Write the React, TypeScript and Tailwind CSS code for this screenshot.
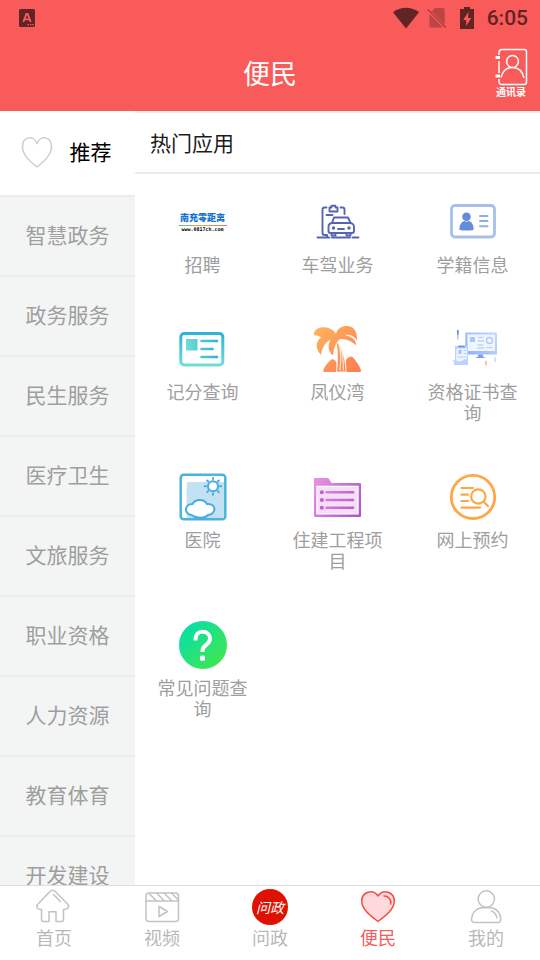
import { useState, type ReactNode } from "react";

const categories = [
  "智慧政务",
  "政务服务",
  "民生服务",
  "医疗卫生",
  "文旅服务",
  "职业资格",
  "人力资源",
  "教育体育",
  "开发建设",
];

function StatusBar() {
  return (
    <div className="flex h-9 items-center pr-3 pl-[19px] text-[#602424]">
      <svg width="16" height="18" viewBox="0 0 16 18" aria-hidden="true">
        <rect width="16" height="18" rx="1.5" fill="currentColor" />
        <path d="M4.3 13 7.4 5h1.2l3.1 8M5.6 10.4h4.8" fill="none" stroke="#f85b5a" strokeWidth="1.9" />
        <path d="M8.5 15.8h1.3M11 15.8h1.3M13.4 15.8h1.3" stroke="#f85b5a" strokeWidth="1.4" />
      </svg>
      <div className="ml-auto flex items-center">
        <svg width="26" height="22" viewBox="0 0 26 22" aria-hidden="true">
          <path d="M0 5.2C7.6-.9 18.4-.9 26 5.2L13 21.5Z" fill="currentColor" />
        </svg>
        <svg className="ml-2" width="20" height="22" viewBox="0 0 20 22" aria-hidden="true">
          <path d="M8 1h8a1.7 1.7 0 0 1 1.700 1.700V17.500L4.800 4.300ZM2.500 7 16 20.500H4A1.500 1.500 0 0 1 2.500 19Z" fill="currentColor" opacity=".4" />
          <path d="m.8 2.500 18 18" stroke="currentColor" strokeWidth="1.600" opacity=".5" />
        </svg>
        <svg className="ml-3" width="16" height="22" viewBox="0 0 16 22" aria-hidden="true">
          <path d="M5 0h6v2h4v20H1V2h4Z" fill="currentColor" />
          <path d="m9.500 5-5.300 8h3v6l5-8H9Z" fill="#f85b5a" />
        </svg>
        <span className="ml-3 font-[Roboto,sans-serif] text-[21px] leading-6 font-medium">6:05</span>
      </div>
    </div>
  );
}

function ContactsButton() {
  return (
    <button type="button" className="absolute top-3 right-3 flex flex-col items-center text-white">
      <svg width="34" height="38" viewBox="1 0 34 38" fill="none" stroke="currentColor" strokeWidth="1.500" aria-hidden="true">
        <path d="M5 7V4.500a3 3 0 0 1 3-3h22.500a2 2 0 0 1 2 2v30.500a2.500 2.500 0 0 1-2.500 2.500H7a3 3 0 0 1-2-2.500v-3M5 13v12" transform="translate(1 0)" />
        <path d="M2.500 9.500H7M2.500 28H7" strokeWidth="3" />
        <circle cx="19.500" cy="13.500" r="5.900" />
        <path d="M8 29.500C9.500 23 13.500 19.500 19.500 19.500s10 4 11.500 10.500" />
      </svg>
      <span className="text-[10px] leading-[11px] font-bold">通讯录</span>
    </button>
  );
}

function RecruitLogo() {
  return (
    <span className="flex h-12 flex-col items-center justify-center whitespace-nowrap">
      <span className="text-[9px] leading-[14px] font-black text-[#1672d2]">南充零距离</span>
      <span className="h-px w-12 bg-linear-to-r from-[#58b98a] via-[#d9a35a] to-[#e8705c]" />
      <span className="font-['DejaVu_Sans_Mono',monospace] text-[5px] leading-[7px] font-bold text-black">www.0817ch.com</span>
    </span>
  );
}

function Icon({ children }: { children: ReactNode }) {
  return (
    <svg width="48" height="48" viewBox="0 0 48 48" fill="none" strokeLinecap="round" strokeLinejoin="round" aria-hidden="true">
      {children}
    </svg>
  );
}

const apps: { name: string; icon: ReactNode }[] = [
  { name: "招聘", icon: <RecruitLogo /> },
  {
    name: "车驾业务",
    icon: (
      <Icon>
        <g stroke="#5665b3" strokeWidth="1.900">
          <path d="M3.500 39.500h12M18 39.500h18M38.500 39.500h6M13 39.500V37H10.500a2 2 0 0 1-2-2V11.500a2 2 0 0 1 2-2h2M26.500 9.500h2a2 2 0 0 1 2 2V16" />
          <path d="M15.500 13.500v-4h2V7.700h4v1.800h2v4ZM12.500 17h6" />
          <path d="m18 25 2-5.500h14L36.500 25M17.500 25H36a4 4 0 0 1 4 4v4a2 2 0 0 1-2 2H16.500a2 2 0 0 1-2-2v-4a4 4 0 0 1 3-4ZM17.500 35v2.500h4V35M32.500 35v2.500h4V35M24 31h6" />
        </g>
        <circle cx="19.500" cy="30" r="1.700" fill="#5665b3" />
        <circle cx="35" cy="30" r="1.700" fill="#5665b3" />
      </Icon>
    ),
  },
  {
    name: "学籍信息",
    icon: (
      <Icon>
        <rect x="2.500" y="7.500" width="43" height="31.500" rx="3.500" stroke="#a6c0e9" strokeWidth="2.800" />
        <circle cx="17.500" cy="18.800" r="4.300" fill="#638cdb" />
        <path d="M10.500 32v-2c0-3.500 2.500-6.500 5-7 1 .9 3 .9 4 0 3 .7 5 3.500 5 7v2q-7 1-14 0Z" fill="#638cdb" />
        <path d="M31 18h7.500M31 23h7.500M31 28.200h7.500" stroke="#8baee7" strokeWidth="2" />
      </Icon>
    ),
  },
  {
    name: "记分查询",
    icon: (
      <Icon>
        <defs>
          <linearGradient id="score-frame" x1="0" y1="8" x2="0" y2="41" gradientUnits="userSpaceOnUse">
            <stop stopColor="#2fb0da" />
            <stop offset="1" stopColor="#70ded6" />
          </linearGradient>
          <linearGradient id="score-row" x1="7" y1="0" x2="39" y2="0" gradientUnits="userSpaceOnUse">
            <stop stopColor="#70ded0" />
            <stop offset="1" stopColor="#31addb" />
          </linearGradient>
        </defs>
        <rect x="1.800" y="8.500" width="42" height="31.500" rx="3.500" stroke="url(#score-frame)" strokeWidth="3" />
        <path d="M7 14h11.500v11.500H7Z" fill="url(#score-row)" />
        <path d="M22.500 16h15.500v.1M22.500 24h11v.1M22.500 32H38v.1" stroke="url(#score-row)" strokeWidth="2.600" />
      </Icon>
    ),
  },
  {
    name: "凤仪湾",
    icon: (
      <Icon>
        <defs>
          <linearGradient id="palm" x1="0" y1="8" x2="43" y2="46" gradientUnits="userSpaceOnUse">
            <stop stopColor="#ffb15d" />
            <stop offset="1" stopColor="#fa7f51" />
          </linearGradient>
        </defs>
        <g fill="url(#palm)">
          <path d="M9.300 45.500C9 44 15 35 18.500 34c1.500.3 3 1.500 4 3.500V47H10.500q-1 0-1.200-1.500ZM32 35c1.500-2 3.500-3.500 5-3.500 3 0 9.500 11 10 14q0 1.500-1.200 1.500H32Z" />
          <path d="M21 13.500C26 21 32 30 32 47h-9.500c1.500-12.500 1.500-25-1.500-33.500Z" stroke="#fff" strokeWidth=".8" />
          <path d="M0 7.500C3 1.500 12 1 17.500 4.500 19.500 5.500 21 7 22 9 23 3 29 .5 34 1c5.500.5 9.500 5 9 14.500-3-4.500-7-6.500-12-5.500 6 2 11.500 4 11 10.500-4-4-8.500-6.500-16-6.500-4 3-6 8-7 16.500-5-4-5.500-10-2.500-16C11 18 8 22.500 7 30 1 23 1.500 16.500 7 12.500 4 10.500 2 10 0 10.500Z" />
        </g>
        <path d="M25.300 20c2 9 2 16 .5 25M27 23c2 7 2.500 14 2.300 22" stroke="#ffe6d4" strokeWidth="1.200" />
      </Icon>
    ),
  },
  {
    name: "资格证书查询",
    icon: (
      <Icon>
        <defs>
          <linearGradient id="monitor" x1="48" y1="8" x2="18" y2="31" gradientUnits="userSpaceOnUse">
            <stop stopColor="#c2d9ff" />
            <stop offset="1" stopColor="#8fb1f9" />
          </linearGradient>
        </defs>
        <rect x="16.300" y="7.500" width="31.700" height="22" rx=".8" fill="url(#monitor)" />
        <path d="M18.500 9.500H46V26H18.500Z" fill="#f0f6ff" />
        <path d="M21 12h5v5h-5Z" fill="#aac5fb" />
        <path d="M29 12.500h5M29 16h6M29 20h5M29 23h6M38 22.500h5" stroke="#c2d4fb" strokeWidth="1.300" />
        <circle cx="40.500" cy="15.500" r="3" stroke="#b1cafb" strokeWidth="1.300" />
        <path d="M29 29.500h5v2l3 1.500H26l3-1.500Z" fill="#7da1f2" />
        <path d="M6 21H19v19H4.500l1.500-5Z" fill="#bbd2ff" />
        <path d="M7.500 23.500h10.500v10L11 37H7Z" fill="#eef4ff" />
        <path d="M9.500 25h3v4h-3Z" fill="#a4c0fb" />
        <path d="M15 25.500h2M15 28.500h2M9 32h8M4 36h4q2 3 8-1" stroke="#b4cbfc" />
        <path d="M10 21.500h5" stroke="#7198f1" strokeWidth="2" />
        <path d="M8.800 5.500v4" stroke="#5b83ed" strokeWidth="1.600" />
        <path d="M8.800 10v4" stroke="#b5caf9" strokeWidth="1.600" />
        <path d="M37 36.500v3" stroke="#eeb993" strokeWidth="1.600" />
        <path d="M37 40.500v2" stroke="#fff0e4" strokeWidth="1.600" />
        <path d="M46 33v3" stroke="#d2e1ff" strokeWidth="2" />
      </Icon>
    ),
  },
  {
    name: "医院",
    icon: (
      <Icon>
        <rect x="1.700" y="1.700" width="44.600" height="44.600" rx="3" stroke="#4cb3df" strokeWidth="2.500" />
        <path d="M7.700 11a2 2 0 0 1 2-2H45v36H7.700Z" fill="#c2e2f4" />
        <g stroke="#46ace0" strokeWidth="2">
          <circle cx="34" cy="13.300" r="5" fill="#fff" />
          <path d="M34 5v1M34 20.500v1.200M25.800 13.300H27M41 13.300h1.200M28.200 7.500l.8.800M39 18.300l.8.800M28.200 19.100l.8-.8M39 8.300l.8-.8" />
          <path d="M12.500 42c-7.500-1-7.500-11 1-11 2.500-5.500 12-5.500 14.500 0 10-1 9.500 10.500 1 11-3 3.500-12 3.500-16.500 0Z" fill="#fff" />
        </g>
      </Icon>
    ),
  },
  {
    name: "住建工程项目",
    icon: (
      <Icon>
        <defs>
          <linearGradient id="folder" x1="0" y1="14" x2="47" y2="42" gradientUnits="userSpaceOnUse">
            <stop stopColor="#e58ee2" />
            <stop offset="1" stopColor="#a857c6" />
          </linearGradient>
        </defs>
        <path d="M0 5.500Q0 5 .5 5h13q1 0 1.500 1l2.500 4H46q1 0 1 1v32q0 1-1 1H1q-1 0-1-1Z" fill="url(#folder)" />
        <path d="M2.300 12.800h42.400v28.700H2.300Z" fill="#fff" />
        <path d="M3.500 14h40v26.500h-40Z" fill="#f6def6" />
        <path d="M12.500 19.300H39v.1M12.500 27H39v.1M12.500 34.700H39v.1" stroke="url(#folder)" strokeWidth="2.600" />
        <path d="M7.800 19.300h.1M7.800 27h.1M7.800 34.700h.1" stroke="#b864ce" strokeWidth="4" />
      </Icon>
    ),
  },
  {
    name: "网上预约",
    icon: (
      <Icon>
        <g stroke="#ffa645" strokeWidth="2.200">
          <circle cx="24" cy="24" r="21.700" strokeWidth="2.800" />
          <path d="M12.500 15H24M12.500 21.700H19M12.500 28H19M12.500 34.700H31M34.700 28.700l4.300 4.300" />
          <circle cx="29.300" cy="23.500" r="7.200" />
        </g>
      </Icon>
    ),
  },
  {
    name: "常见问题查询",
    icon: (
      <Icon>
        <defs>
          <linearGradient id="help" x1="5" y1="7" x2="41" y2="43" gradientUnits="userSpaceOnUse">
            <stop stopColor="#08dfa6" />
            <stop offset="1" stopColor="#41e650" />
          </linearGradient>
        </defs>
        <circle cx="24" cy="24" r="24" fill="url(#help)" />
        <path d="M16.500 19.500v-1.500c0-4.500 3-7.300 7-7.300 4.500 0 7.500 2.800 7.500 7 0 6-7.500 6.300-7.500 11.800v1.500" stroke="#fff" strokeWidth="4" strokeLinecap="butt" />
        <rect x="21" y="34.500" width="5" height="5.200" rx="1.500" fill="#fff" />
      </Icon>
    ),
  },
];

function TabIcon({ children }: { children: ReactNode }) {
  return (
    <svg width="36" height="36" viewBox="0 0 36 36" fill="none" stroke="#c2c2c2" strokeWidth="1.500" strokeLinecap="round" strokeLinejoin="round" aria-hidden="true">
      {children}
    </svg>
  );
}

const tabs: { name: string; icon: ReactNode }[] = [
  {
    name: "首页",
    icon: (
      <TabIcon>
        <path d="M14 2.500 1.700 15.300C-.5 18 2 21 5.500 20.500v10a2 2 0 0 0 2 2H13v-9.700h7v9.700h5.500a2 2 0 0 0 2-2v-10c3.700.5 6.500-2.500 4.300-5.200L19.300 2.500C17.700.9 15.700.9 14 2.500ZM17.500 5.500l7 7" />
      </TabIcon>
    ),
  },
  {
    name: "视频",
    icon: (
      <TabIcon>
        <rect x="2" y="4" width="32.500" height="28.500" rx="3" />
        <path d="M2 12h32.500M5.500 5l7 7M12.500 4l8 8M20 4l8 8M27.500 4l7 7M15 17.500v10l8.500-5Z" />
      </TabIcon>
    ),
  },
  {
    name: "问政",
    icon: (
      <span className="flex size-9 items-center justify-center rounded-full bg-[#df1100] text-[14px] leading-4 text-white italic">
        问政
      </span>
    ),
  },
  {
    name: "便民",
    icon: (
      <TabIcon>
        <path d="M18 32.500C10 26.500 1.700 20 1.700 12c0-9 11.300-12.500 16.300-5C23-.5 34.300 3 34.300 12c0 8-8.300 14.500-16.300 20.500Z" fill="#ffd9db" stroke="#f64c3d" />
        <path d="M24 7c4-.3 7.500 3.500 6.700 8" stroke="#f64c3d" />
      </TabIcon>
    ),
  },
  {
    name: "我的",
    icon: (
      <TabIcon>
        <circle cx="18.300" cy="10" r="8.200" />
        <path d="M13 18.700h10.500c5.500 1.300 9 5.800 9.300 11.500 0 2-1.300 3.300-3.300 3.300H6.800c-2 0-3.300-1.300-3.300-3.300C3.800 24.500 7.500 20 13 18.700ZM23.500 22c3.500 1.500 5 4 5.500 7" />
      </TabIcon>
    ),
  },
];

export default function App() {
  const [tab, setTab] = useState("便民");

  return (
    <div className="flex h-screen flex-col bg-white font-['Noto_Sans_CJK_SC',sans-serif]">
      <header className="bg-[#f85b5a]">
        <StatusBar />
        <div className="relative flex h-[75px] items-center justify-center">
          <h1 className="pb-0.5 text-[27px] leading-9 text-white">便民</h1>
          <ContactsButton />
        </div>
      </header>

      <div className="flex min-h-0 flex-1">
        <nav aria-label="分类" className="w-1/4 overflow-y-auto bg-[#f3f5f4] text-[21px] text-[#9e9e9e] [scrollbar-width:none]">
          <button type="button" className="flex h-[86px] w-full items-center justify-center gap-4 border-b-2 border-[#ececec] bg-white pr-1 pb-0.5 text-black">
            <svg width="34" height="34" viewBox="0 0 34 34" fill="none" stroke="#cdcdcd" strokeWidth="1.500" strokeLinejoin="round" aria-hidden="true">
              <path d="M17 32C10 26.500 2.500 20 2.500 11.500c0-10 11.500-12 14.500-3 3-9 14.500-7 14.500 3C31.500 20 24 26.500 17 32Z" />
            </svg>
            推荐
          </button>
          {categories.map((name) => (
            <button key={name} type="button" className="block h-20 w-full border-b-2 border-[#ececec] pb-0.5">
              {name}
            </button>
          ))}
        </nav>

        <main className="flex-1 overflow-y-auto [scrollbar-width:none]">
          <h2 className="flex h-[63px] items-center border-y-2 border-[#ececec] px-[15px] text-[21px] text-[#1c1c1c]">热门应用</h2>
          <div className="grid grid-cols-3">
            {apps.map((app) => (
              <button key={app.name} type="button" className="flex flex-col items-center px-5 pt-6 pb-[26px]">
                {app.icon}
                <span className="mt-2 text-[18px] leading-[21px] text-[#9e9e9e]">{app.name}</span>
              </button>
            ))}
          </div>
        </main>
      </div>

      <nav aria-label="主导航" className="grid h-[75px] grid-cols-5 border-t border-[#dedede]">
        {tabs.map(({ name, icon }) => (
          <button
            key={name}
            type="button"
            onClick={() => setTab(name)}
            className={`flex flex-col items-center pt-[3px] text-[18px] leading-6 ${tab === name ? "text-[#f85b5a]" : "text-[#b8b8b8]"}`}
          >
            {icon}
            {name}
          </button>
        ))}
      </nav>
    </div>
  );
}
